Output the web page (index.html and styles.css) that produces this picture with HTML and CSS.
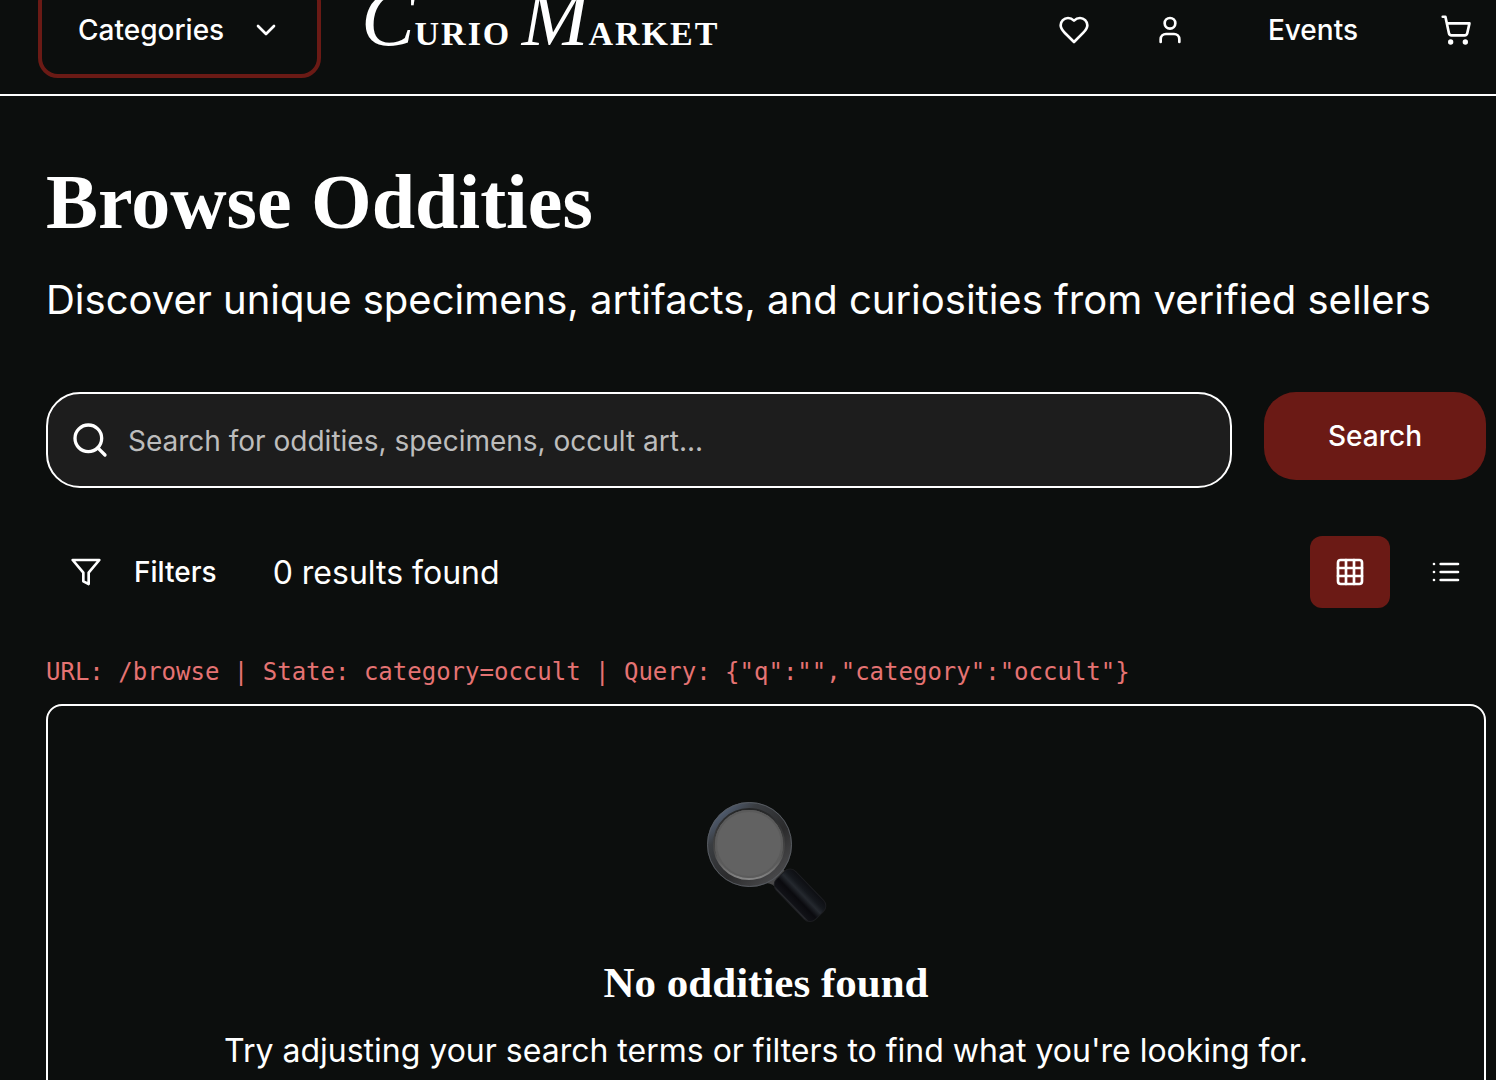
FILE: index.html
```html
<!DOCTYPE html>
<html lang="en">
<head>
<meta charset="utf-8">
<meta name="viewport" content="width=device-width, initial-scale=1">
<title>Curio Market – Browse Oddities</title>
<link rel="stylesheet" href="styles.css">
</head>
<body>
<header class="site-header">
  <button class="categories" type="button">Categories
    <svg class="icon" viewBox="0 0 24 24"><path d="m6 9 6 6 6-6"/></svg>
  </button>
  <a class="logo" href="#"><span class="logo-cap">C</span>URIO <span class="logo-cap">M</span>ARKET</a>
  <nav class="site-nav">
    <a class="nav-icon" href="#" aria-label="Favorites"><svg class="icon" viewBox="0 0 24 24"><path d="M19 14c1.49-1.46 3-3.21 3-5.5A5.5 5.5 0 0 0 16.5 3c-1.76 0-3 .5-4.5 2-1.5-1.5-2.74-2-4.5-2A5.5 5.5 0 0 0 2 8.5c0 2.3 1.5 4.05 3 5.5l7 7Z"/></svg></a>
    <a class="nav-icon" href="#" aria-label="Account"><svg class="icon" viewBox="0 0 24 24"><path d="M19 21v-2a4 4 0 0 0-4-4H9a4 4 0 0 0-4 4v2"/><circle cx="12" cy="7" r="4"/></svg></a>
    <a class="nav-link" href="#">Events</a>
    <a class="nav-icon" href="#" aria-label="Cart"><svg class="icon" viewBox="0 0 24 24"><circle cx="8" cy="21" r="1"/><circle cx="19" cy="21" r="1"/><path d="M2.05 2.05h2l2.66 12.42a2 2 0 0 0 2 1.58h9.78a2 2 0 0 0 1.95-1.57l1.65-7.43H5.12"/></svg></a>
  </nav>
</header>
<main class="page">
  <h1 class="title">Browse Oddities</h1>
  <p class="subtitle">Discover unique specimens, artifacts, and curiosities from verified sellers</p>
  <form class="search">
    <label class="search-box">
      <svg class="icon icon-large" viewBox="0 0 24 24"><circle cx="11" cy="11" r="8"/><path d="m21 21-4.3-4.3"/></svg>
      <input class="search-input" type="text" aria-label="Search" placeholder="Search for oddities, specimens, occult art...">
    </label>
    <button class="search-button" type="button">Search</button>
  </form>
  <div class="toolbar">
    <button class="filters" type="button">
      <svg class="icon" viewBox="0 0 24 24"><path d="M22 3H2l8 9.46V19l4 2v-8.54Z"/></svg>
      Filters
    </button>
    <span class="results">0 results found</span>
    <div class="views">
      <button class="view view-active" type="button" aria-label="Grid view"><svg class="icon" viewBox="0 0 24 24"><rect x="3" y="3" width="18" height="18" rx="2"/><path d="M3 9h18M3 15h18M9 3v18M15 3v18"/></svg></button>
      <button class="view" type="button" aria-label="List view"><svg class="icon" viewBox="0 0 24 24"><path d="M8 6h13M8 12h13M8 18h13M3 6h.01M3 12h.01M3 18h.01"/></svg></button>
    </div>
  </div>
  <p class="debug">URL: /browse | State: category=occult | Query: {"q":"","category":"occult"}</p>
  <section class="empty">
    <svg class="magnifier" viewBox="0 0 128 128" aria-hidden="true">
      <defs>
        <linearGradient id="rim" x1="0.1" y1="0.1" x2="0.8" y2="0.9">
          <stop offset="0" stop-color="#56657d"/><stop offset="0.25" stop-color="#3a3d41"/><stop offset="0.65" stop-color="#2b2b2c"/><stop offset="1" stop-color="#48484a"/>
        </linearGradient>
        <linearGradient id="bezel" x1="0.5" y1="0" x2="0.5" y2="1">
          <stop offset="0" stop-color="#252627"/><stop offset="0.6" stop-color="#484848"/><stop offset="1" stop-color="#858585"/>
        </linearGradient>
        <linearGradient id="grip" x1="0" y1="0" x2="0" y2="1">
          <stop offset="0" stop-color="#0d0e12"/><stop offset="0.25" stop-color="#15181d"/><stop offset="0.42" stop-color="#25292f"/><stop offset="0.65" stop-color="#0a0a0e"/><stop offset="0.92" stop-color="#111217"/><stop offset="1" stop-color="#3a3c40"/>
        </linearGradient>
      </defs>
      <path d="M68 84q9-3 11-15l8 13-12 12q-3-7-12-7Z" fill="#49494a"/>
      <circle cx="47.500" cy="48.500" r="42.500" fill="url(#rim)"/>
      <circle cx="47.500" cy="48.500" r="42" fill="none" stroke="#565a60" stroke-width="1"/>
      <circle cx="47" cy="48" r="35" fill="#626262" stroke="url(#bezel)" stroke-width="2"/>
      <circle cx="47" cy="48" r="33" fill="none" stroke="#5b5b5b" stroke-width="2"/>
      <g transform="translate(81 81) rotate(46)"><rect x="-3" y="-13" width="56" height="27" rx="8" fill="url(#grip)" stroke="#1c1d20" stroke-width="1"/></g>
    </svg>
    <h2 class="empty-title">No oddities found</h2>
    <p class="empty-text">Try adjusting your search terms or filters to find what you're looking for.</p>
  </section>
</main>
</body>
</html>
```
FILE: styles.css
```css
* { box-sizing: border-box; }

body {
  margin: 0;
  height: 100vh;
  overflow: hidden;
  background: #0c0e0d;
  color: #fff;
  font-family: Inter, "Liberation Sans", sans-serif;
  font-size: 28px;
  line-height: 40px;
}

h1, h2, p { margin: 0; }
a { color: inherit; text-decoration: none; }

button {
  display: flex;
  align-items: center;
  border: 0;
  background: none;
  color: inherit;
  font: inherit;
  font-weight: 500;
}

.icon {
  width: 32px;
  height: 32px;
  flex: none;
  fill: none;
  stroke: currentColor;
  stroke-width: 2;
  stroke-linecap: round;
  stroke-linejoin: round;
}
.icon-large { width: 40px; height: 40px; }

/* The bar is tucked partly above the top edge of the window */
.site-header {
  display: flex;
  align-items: center;
  height: 130px;
  margin-top: -34px;
  padding-left: 38px;
  border-bottom: 2px solid #fff;
}

.categories {
  gap: 26px;
  height: 96px;
  padding: 0 35px 0 36px;
  border: 4px solid #6b1a15;
  border-radius: 20px;
}

.logo {
  margin-left: 40px;
  padding-bottom: 8px;
  font-family: "Liberation Serif", serif;
  font-size: 34px;
  font-weight: 700;
  letter-spacing: 2px;
  white-space: nowrap;
}
.logo-cap {
  font-size: 80px;
  font-style: italic;
  font-weight: 400;
  letter-spacing: 0;
}

.site-nav { display: flex; align-items: center; margin-left: auto; gap: 16px; }
.nav-icon { display: flex; padding: 24px; }
.nav-link { padding: 0 42px; font-weight: 500; }

.page { padding: 62px 10px 0 46px; }

.title {
  font-family: "Liberation Serif", serif;
  font-size: 78px;
  font-weight: 700;
  line-height: 88px;
}

.subtitle { margin-top: 26px; font-size: 40px; line-height: 56px; white-space: nowrap; }

.search { display: flex; align-items: flex-start; gap: 32px; margin-top: 64px; }
.search-box {
  display: flex;
  flex: 1;
  align-items: center;
  gap: 18px;
  height: 96px;
  padding: 0 22px;
  border: 2px solid #fff;
  border-radius: 34px;
  background: #1d1d1d;
}
.search-input {
  flex: 1;
  min-width: 0;
  padding: 2px 0 0;
  border: 0;
  outline: 0;
  background: none;
  color: #fff;
  font: inherit;
}
.search-input::placeholder { color: #bdbdbd; opacity: 1; }
.search-button {
  height: 88px;
  padding: 0 64px;
  border-radius: 32px;
  background: #6b1a15;
}

.toolbar { display: flex; align-items: center; margin-top: 48px; }
.filters { gap: 32px; height: 72px; padding: 0 24px; }
.results { margin-left: 32px; padding-top: 2px; font-size: 32px; }
.views { display: flex; gap: 16px; margin-left: auto; }
.view {
  justify-content: center;
  width: 80px;
  height: 72px;
  padding: 0;
  border-radius: 12px;
}
.view-active { background: #6b1a15; }

.debug {
  margin-top: 48px;
  color: #e57373;
  font-family: "DejaVu Sans Mono", monospace;
  font-size: 24px;
  line-height: 32px;
  white-space: nowrap;
}

.empty {
  display: flex;
  flex-direction: column;
  align-items: center;
  margin-top: 16px;
  padding: 90px 32px 96px;
  border: 2px solid #fff;
  border-radius: 16px;
}
.magnifier { width: 128px; height: 128px; }
.empty-title {
  margin-top: 31px;
  font-family: "Liberation Serif", serif;
  font-size: 43px;
  font-weight: 700;
  line-height: 56px;
}
.empty-text { margin-top: 16px; font-size: 32px; line-height: 48px; }
```
